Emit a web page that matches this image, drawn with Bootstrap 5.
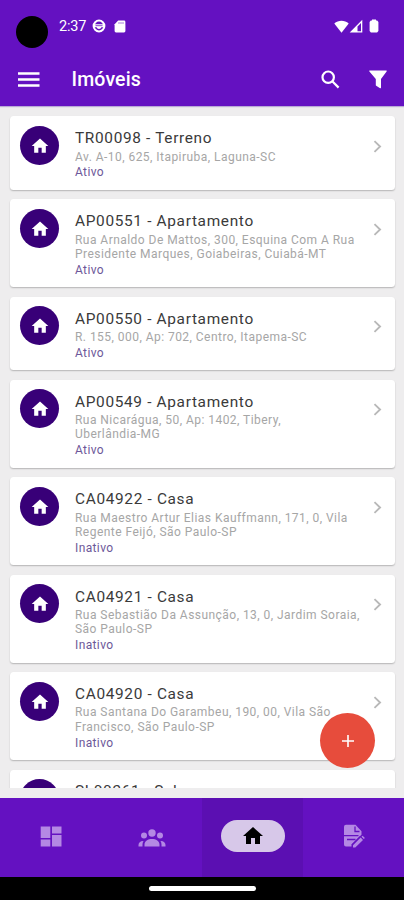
<!DOCTYPE html>
<html lang="pt-BR">
<head>
<meta charset="utf-8">
<meta name="viewport" content="width=device-width, initial-scale=1">
<title>Imóveis</title>
<link href="https://cdn.jsdelivr.net/npm/bootstrap@5.3.0/dist/css/bootstrap.min.css" rel="stylesheet">
<style>
  body { font-family: Roboto, "Liberation Sans", sans-serif; background: #eeedee; height: 900px; }
  svg { display: block; flex: none; }
  .top-area { background: #6411c1; height: 106px; box-shadow: 0 1px 1px #b9a9d6; z-index: 2; }
  .status-bar { height: 52px; padding-left: 16px; padding-right: 25px; }
  .camera { width: 32px; height: 32px; margin-top: 12px; background: #000; }
  .clock { font-size: 14.5px; margin-left: 11px; width: 29px; line-height: 16px; letter-spacing: -.2px; padding-top: 1px; }
  .app-bar { height: 54px; padding: 1px 17px 0 18px; }
  .app-title { font-size: 19.5px; font-weight: 500; margin-left: 31.5px; line-height: 24px; letter-spacing: .16px; padding-top: 1px; }
  .listing { height: 682px; padding: 10.3px 9px 0 10px; }
  .property { border-radius: 3.5px; padding: 9.7px 13px 0 10px; margin-bottom: 9.7px; height: 87.8px; box-shadow: 0 1px 1.5px rgba(0,0,0,.24); }
  .property.short { height: 73.3px; }
  .avatar { width: 39px; height: 39px; background: #380078; padding-top: 1px; }
  .info { margin-left: 16px; padding-top: 4.1px; white-space: nowrap; }
  .code { font-size: 15.4px; line-height: 17px; letter-spacing: .67px; color: #3a3a3a; }
  .address { font-size: 12px; line-height: 14.2px; letter-spacing: .46px; color: #a6a6a6; padding-top: 2.5px; }
  .state { font-size: 12px; line-height: 14.4px; letter-spacing: .38px; color: #6d5899; padding-top: 1.7px; }
  .chev { margin-top: 14px; }
  .add { width: 55px; height: 55px; right: 29px; top: 713px; background: #e74c3c; z-index: 3; }
  .tabs { height: 79px; background: #6411c1; margin-top: 10px; }
  .tab { padding-bottom: 3px; color: #b488e4; }
  .tab.active { background: #5b0fb2; color: #000; }
  .pill { width: 64px; height: 32px; background: #d7c8e9; }
  .gesture { height: 23px; }
  .gesture span { width: 107px; height: 5px; background: #fff; }
</style>
<script src="https://cdn.jsdelivr.net/npm/bootstrap@5.3.0/dist/js/bootstrap.bundle.min.js"></script>
</head>
<body class="overflow-hidden position-relative d-flex flex-column">
<svg width="0" height="0" class="position-absolute">
  <symbol id="home" viewBox="0 0 24 24"><path fill="currentColor" d="M10 20v-6h4v6h5v-8h3L12 3 2 12h3v8z"/></symbol>
  <symbol id="chevron" viewBox="0 0 8 12"><path fill="none" stroke="#b8b8b8" stroke-width="1.7" d="M1.2 1l5.2 5-5.2 5"/></symbol>
</svg>

<header class="top-area text-white position-relative flex-shrink-0">
  <div class="status-bar d-flex align-items-center">
    <div class="camera rounded-circle"></div>
    <span class="clock">2:37</span>
    <svg class="ms-1" width="14" height="14" viewBox="0 0 14 14"><circle cx="7" cy="7" r="5.4" fill="none" stroke="#fff" stroke-width="2"/><path fill="#fff" d="M2 5.2h10v3H9.4a2.5 2.5 0 0 1-4.8 0H2z"/><path stroke="#6411c1" stroke-width=".8" d="M3.5 6.7h7"/></svg>
    <svg class="ms-2" width="12" height="13" viewBox="0 0 12 13"><path fill="#fff" d="M4.2.5H10a1.4 1.4 0 0 1 1.4 1.4v9.2a1.4 1.4 0 0 1-1.4 1.4H2A1.4 1.4 0 0 1 .6 11.100V4.300z"/><path stroke="#6411c1" stroke-opacity=".55" d="M5 2v2M7 2v2M9 2v2"/></svg>
    <svg class="ms-auto" width="15" height="13" viewBox="0 0 15 13"><path fill="#fff" d="M.3 3.500C4.300-.3 10.700-.3 14.700 3.500L7.500 12.800z"/></svg>
    <svg width="14" height="14" viewBox="0 0 14 14"><path fill="#fff" fill-rule="evenodd" d="M.7 13.500L13.300.7v12.800zM8.500 7.600v4.600H12V4.100z"/></svg>
    <svg style="margin-left:6px" width="10" height="14" viewBox="0 0 10 14"><path fill="#fff" d="M3 .4h4v1.200h1.200l1.200 1.300v9.200l-1.300 1.400H1.900L.6 12.100V2.900l1.200-1.300H3z"/></svg>
  </div>
  <div class="app-bar d-flex align-items-center">
    <svg width="22" height="15" viewBox="0 0 22 15"><path stroke="#fff" stroke-width="2.500" d="M0 1.400h21.500M0 7.500h21.500M0 13.500h21.500"/></svg>
    <span class="app-title">Imóveis</span>
    <svg class="ms-auto" width="19" height="19" viewBox="0 0 19 19"><g fill="none" stroke="#fff" stroke-width="2.200"><circle cx="7.200" cy="7.200" r="5.700"/><path d="M11.300 11.300l6.300 6.300"/></g></svg>
    <svg style="margin-left:29px" width="18" height="19" viewBox="0 0 18 19"><path fill="#fff" d="M.8.500h16.400c.6 0 .7.700.4 1.100L12 9v8.600c0 .7-.4.9-.9.600L7.200 15.800a1 1 0 0 1-.4-.8V9L.4 1.600C.1 1.200.2.500.8.500z"/></svg>
  </div>
</header>

<main class="listing overflow-hidden flex-shrink-0">
  <article class="property short bg-white d-flex align-items-start">
    <div class="avatar rounded-circle text-white d-flex align-items-center justify-content-center flex-shrink-0"><svg width="20" height="20"><use href="#home"/></svg></div>
    <div class="info flex-grow-1"><div class="code">TR00098 - Terreno</div><div class="address">Av. A-10, 625, Itapiruba, Laguna-SC</div><div class="state">Ativo</div></div>
    <svg class="chev" width="9" height="13"><use href="#chevron"/></svg>
  </article>
  <article class="property bg-white d-flex align-items-start">
    <div class="avatar rounded-circle text-white d-flex align-items-center justify-content-center flex-shrink-0"><svg width="20" height="20"><use href="#home"/></svg></div>
    <div class="info flex-grow-1"><div class="code">AP00551 - Apartamento</div><div class="address">Rua Arnaldo De Mattos, 300, Esquina Com A Rua<br>Presidente Marques, Goiabeiras, Cuiabá-MT</div><div class="state">Ativo</div></div>
    <svg class="chev" width="9" height="13"><use href="#chevron"/></svg>
  </article>
  <article class="property short bg-white d-flex align-items-start">
    <div class="avatar rounded-circle text-white d-flex align-items-center justify-content-center flex-shrink-0"><svg width="20" height="20"><use href="#home"/></svg></div>
    <div class="info flex-grow-1"><div class="code">AP00550 - Apartamento</div><div class="address">R. 155, 000, Ap: 702, Centro, Itapema-SC</div><div class="state">Ativo</div></div>
    <svg class="chev" width="9" height="13"><use href="#chevron"/></svg>
  </article>
  <article class="property bg-white d-flex align-items-start">
    <div class="avatar rounded-circle text-white d-flex align-items-center justify-content-center flex-shrink-0"><svg width="20" height="20"><use href="#home"/></svg></div>
    <div class="info flex-grow-1"><div class="code">AP00549 - Apartamento</div><div class="address">Rua Nicarágua, 50, Ap: 1402, Tibery,<br>Uberlândia-MG</div><div class="state">Ativo</div></div>
    <svg class="chev" width="9" height="13"><use href="#chevron"/></svg>
  </article>
  <article class="property bg-white d-flex align-items-start">
    <div class="avatar rounded-circle text-white d-flex align-items-center justify-content-center flex-shrink-0"><svg width="20" height="20"><use href="#home"/></svg></div>
    <div class="info flex-grow-1"><div class="code">CA04922 - Casa</div><div class="address">Rua Maestro Artur Elias Kauffmann, 171, 0, Vila<br>Regente Feijó, São Paulo-SP</div><div class="state">Inativo</div></div>
    <svg class="chev" width="9" height="13"><use href="#chevron"/></svg>
  </article>
  <article class="property bg-white d-flex align-items-start">
    <div class="avatar rounded-circle text-white d-flex align-items-center justify-content-center flex-shrink-0"><svg width="20" height="20"><use href="#home"/></svg></div>
    <div class="info flex-grow-1"><div class="code">CA04921 - Casa</div><div class="address">Rua Sebastião Da Assunção, 13, 0, Jardim Soraia,<br>São Paulo-SP</div><div class="state">Inativo</div></div>
    <svg class="chev" width="9" height="13"><use href="#chevron"/></svg>
  </article>
  <article class="property bg-white d-flex align-items-start">
    <div class="avatar rounded-circle text-white d-flex align-items-center justify-content-center flex-shrink-0"><svg width="20" height="20"><use href="#home"/></svg></div>
    <div class="info flex-grow-1"><div class="code">CA04920 - Casa</div><div class="address">Rua Santana Do Garambeu, 190, 00, Vila São<br>Francisco, São Paulo-SP</div><div class="state">Inativo</div></div>
    <svg class="chev" width="9" height="13"><use href="#chevron"/></svg>
  </article>
  <article class="property bg-white d-flex align-items-start">
    <div class="avatar rounded-circle flex-shrink-0"></div>
    <div class="info flex-grow-1"><div class="code">SL00261 - Sala</div></div>
  </article>
</main>

<button class="add btn border-0 p-0 rounded-circle position-absolute d-flex align-items-center justify-content-center" aria-label="Adicionar">
  <svg width="12" height="12" viewBox="0 0 12 12"><path stroke="#fff" stroke-width="1.600" d="M0 6h12M6 0v12"/></svg>
</button>

<nav class="tabs d-flex flex-shrink-0">
  <div class="tab col-3 d-flex align-items-center justify-content-center"><svg width="22" height="21" viewBox="0 0 22 21"><path fill="currentColor" d="M.7.500h9.600v11.500H.7zM12 .500h9.500v7H12zM.7 13.500h9.600v7H.7zM12 9h9.500v11.500H12z"/></svg></div>
  <div class="tab col-3 d-flex align-items-center justify-content-center"><svg class="mt-1" width="28" height="18" viewBox="0 0 28 18"><g fill="currentColor"><circle cx="14" cy="4" r="3.700"/><circle cx="6" cy="6.500" r="3"/><circle cx="22" cy="6.500" r="3"/><path d="M6.500 17.500v-2c0-3.500 3.500-5.500 7.500-5.500s7.500 2 7.500 5.500v2zM.5 17.500v-1.400c0-2.500 1.800-4.200 5-4.100-.7 1-1 2.300-1 3.500v2zM27.500 17.500v-1.400c0-2.500-1.800-4.200-5-4.100.7 1 1 2.300 1 3.500v2z"/></g></svg></div>
  <div class="tab active col-3 d-flex align-items-center justify-content-center"><span class="pill rounded-pill d-flex align-items-center justify-content-center"><svg width="24" height="24"><use href="#home"/></svg></span></div>
  <div class="tab col-3 d-flex align-items-center justify-content-center"><svg width="22" height="24" viewBox="0 0 22 24"><path fill="currentColor" d="M3 .7h9.500l6 6.500v3.500L8.500 20.500v2H3a2 2 0 0 1-2-2V2.700a2 2 0 0 1 2-2z"/><path fill="none" stroke="#6411c1" stroke-width="1.300" d="M12 2.500v5h4.500M1 11.700h14.500M4 15.500h8.500"/><path fill="none" stroke="#6411c1" stroke-width="1.400" d="M9 21l8.700-8.700"/><path fill="currentColor" d="M10 21.200l7.700-7.600 2.300 2.300-7.700 7.600H10zM18.500 12.800l1.100-1.100 2.300 2.300-1.100 1.100z"/></svg></div>
</nav>
<footer class="gesture bg-black d-flex align-items-center justify-content-center flex-shrink-0"><span class="rounded-pill"></span></footer>
</body>
</html>
